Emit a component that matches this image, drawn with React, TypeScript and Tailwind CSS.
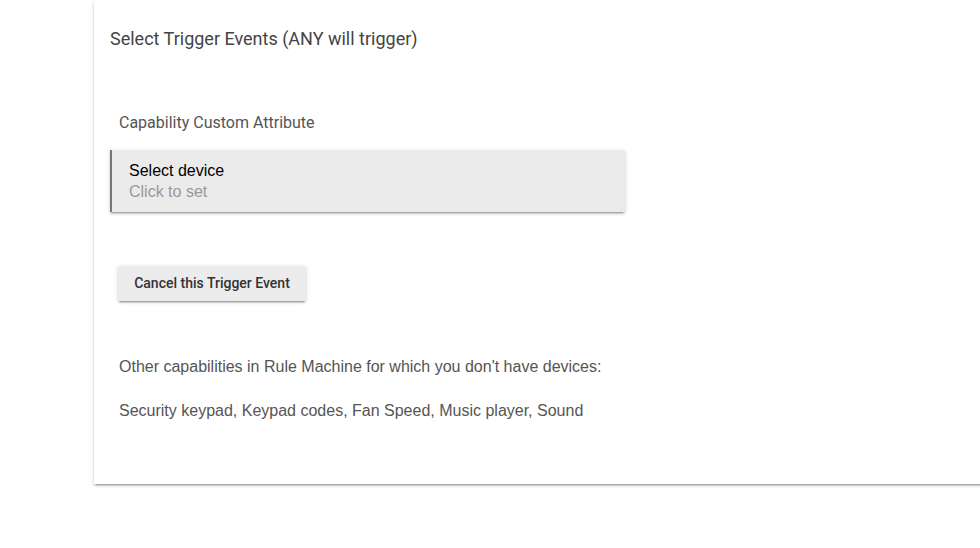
import React from 'react'

export default function App() {
  return (
    <div className="w-[980px] h-[548px] overflow-hidden bg-white">
      <div className="ml-[94px] w-[920px] h-[484px] bg-white shadow-[0_2px_2px_0_rgba(0,0,0,0.14),0_3px_1px_-2px_rgba(0,0,0,0.2),0_1px_5px_0_rgba(0,0,0,0.12)] pl-[16px] pt-[27px]">
        <h1 className="text-[18px] leading-[24px] text-[#444] font-['Roboto',sans-serif]">
          Select Trigger Events (ANY will trigger)
        </h1>
        <p className="mt-[61px] ml-[9px] text-[16px] leading-[22px] text-[#555] font-['Roboto',sans-serif]">
          Capability Custom Attribute
        </p>
        <div className="mt-[16px] w-[515px] h-[62px] bg-[#ebebeb] border-l-2 border-[#777] shadow-[0_2px_2px_0_rgba(0,0,0,0.14),0_3px_1px_-2px_rgba(0,0,0,0.2),0_1px_5px_0_rgba(0,0,0,0.12)] pl-[17px] pt-[10px] font-['Liberation_Sans',Arial,sans-serif] text-[16px] leading-[21px]">
          <div className="text-black">Select device</div>
          <div className="text-[#999]">Click to set</div>
        </div>
        <button className="mt-[54px] ml-[8px] w-[188px] h-[35px] bg-[#ececec] rounded-[2px] shadow-[0_2px_2px_0_rgba(0,0,0,0.14),0_3px_1px_-2px_rgba(0,0,0,0.2),0_1px_5px_0_rgba(0,0,0,0.12)] text-[14px] font-medium text-[#333] font-['Roboto',sans-serif]">
          Cancel this Trigger Event
        </button>
        <div className="mt-[55px] ml-[9px] font-['Liberation_Sans',Arial,sans-serif] text-[16px] leading-[22px] text-[#555]">
          <p>Other capabilities in Rule Machine for which you don't have devices:</p>
          <p className="mt-[22px]">Security keypad, Keypad codes, Fan Speed, Music player, Sound</p>
        </div>
      </div>
    </div>
  )
}
